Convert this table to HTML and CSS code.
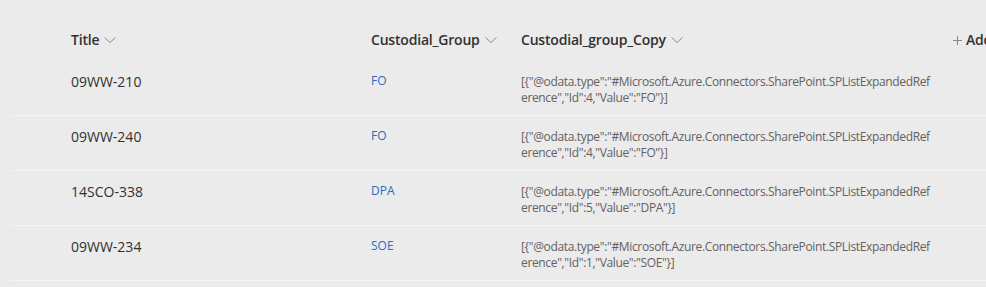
FILE: index.html
```html
<!DOCTYPE html>
<html lang="en">
<head>
  <meta charset="UTF-8" />
  <title>List</title>
  <link rel="stylesheet" href="styles.css">
</head>
<body>
  <div class="list">
    <div class="head">
      <div class="col-head">Title <svg class="chev" width="12" height="8" viewBox="0 0 12 8"><path d="M0.5 1.5 L6 6.5 L11.5 1.5" /></svg></div>
      <div class="col-head">Custodial_Group <svg class="chev" width="12" height="8" viewBox="0 0 12 8"><path d="M0.5 1.5 L6 6.5 L11.5 1.5" /></svg></div>
      <div class="col-head">Custodial_group_Copy <svg class="chev" width="12" height="8" viewBox="0 0 12 8"><path d="M0.5 1.5 L6 6.5 L11.5 1.5" /></svg></div>
      <div class="col-head add"><svg class="plus" width="9" height="9" viewBox="0 0 9 9"><path d="M4.5 0 V9 M0 4.5 H9" /></svg> Add column</div>
    </div>

    <div class="row">
      <div class="cell title">09WW-210</div>
      <div class="cell group"><a href="#">FO</a></div>
      <div class="cell copy">[{"@odata.type":"#Microsoft.Azure.Connectors.SharePoint.SPListExpandedReference","Id":4,"Value":"FO"}]</div>
    </div>
    <div class="row">
      <div class="cell title">09WW-240</div>
      <div class="cell group"><a href="#">FO</a></div>
      <div class="cell copy">[{"@odata.type":"#Microsoft.Azure.Connectors.SharePoint.SPListExpandedReference","Id":4,"Value":"FO"}]</div>
    </div>
    <div class="row">
      <div class="cell title">14SCO-338</div>
      <div class="cell group"><a href="#">DPA</a></div>
      <div class="cell copy">[{"@odata.type":"#Microsoft.Azure.Connectors.SharePoint.SPListExpandedReference","Id":5,"Value":"DPA"}]</div>
    </div>
    <div class="row">
      <div class="cell title">09WW-234</div>
      <div class="cell group"><a href="#">SOE</a></div>
      <div class="cell copy">[{"@odata.type":"#Microsoft.Azure.Connectors.SharePoint.SPListExpandedReference","Id":1,"Value":"SOE"}]</div>
    </div>
  </div>
</body>
</html>
```

FILE: styles.css
```css
* { box-sizing: border-box; margin: 0; padding: 0; }

body {
  background: #ebebeb;
  font-family: "Open Sans", "Noto Sans", sans-serif;
  color: #323130;
  overflow: hidden;
}

.list {
  padding-left: 11px;
}

.head,
.row {
  display: grid;
  grid-template-columns: 300px 150px 431px 200px;
  padding-left: 60px;
  white-space: nowrap;
}

.head {
  height: 61px;
  padding-top: 30px;
  align-items: start;
}

.col-head {
  height: 20px;
  font-size: 14px;
  line-height: 20px;
  font-weight: 600;
  letter-spacing: -0.2px;
  display: flex;
  align-items: center;
  gap: 5px;
}

.chev path,
.plus path {
  fill: none;
  stroke: #8a8886;
  stroke-width: 1;
}

.add {
  padding-left: 1px;
  gap: 4px;
}

.row {
  height: 55px;
  border-bottom: 1px solid #f4f4f4;
}

.cell.title {
  font-size: 14px;
  line-height: 20px;
  padding-top: 11px;
}

.cell.group {
  font-size: 12px;
  line-height: 16px;
  padding-top: 12px;
}

.cell.group a {
  color: #2b6cc0;
  text-decoration: none;
}

.cell.copy {
  width: 410px;
  font-size: 12px;
  line-height: 16px;
  letter-spacing: -0.35px;
  padding-top: 13px;
  color: #646260;
  white-space: normal;
  word-break: break-all;
}
```
